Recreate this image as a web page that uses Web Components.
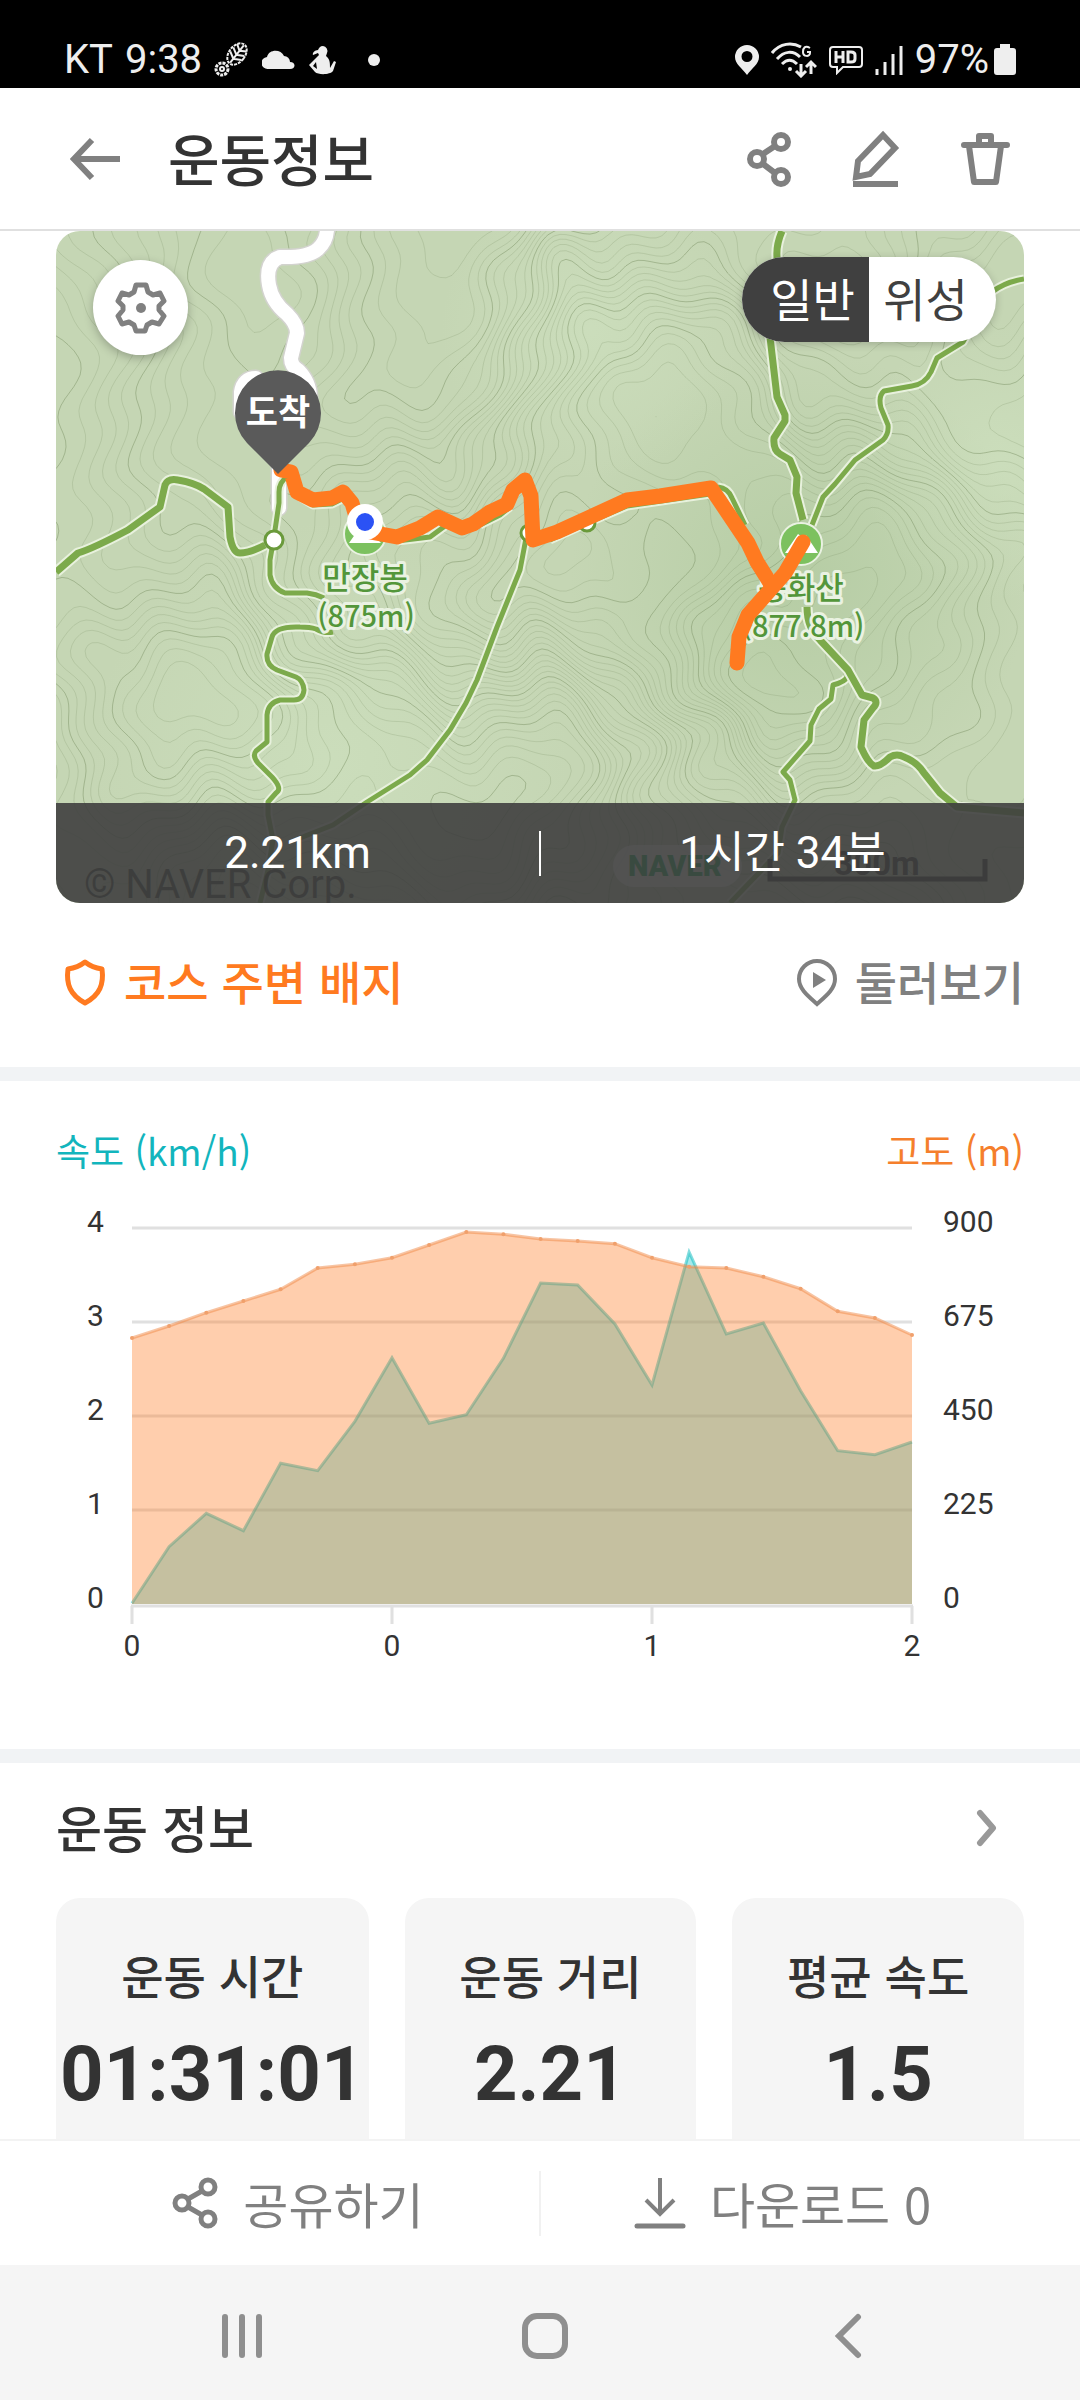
<!DOCTYPE html>
<html lang="ko">
<head>
<meta charset="utf-8">
<meta name="viewport" content="width=device-width, initial-scale=1">
<title>운동정보</title>
<style>
  html, body { margin: 0; height: 100%; background: #fff; }
  body { font-family: "Noto Sans CJK KR", sans-serif; color: #333; }
</style>
</head>
<body>
<workout-app></workout-app>
<script>
const define = (name, html, setup) => customElements.define(name, class extends HTMLElement {
  constructor() {
    super();
    this.attachShadow({ mode: 'open' });
  }
  connectedCallback() {
    if (this.shadowRoot.childNodes.length) return;
    const t = document.createElement('template');
    t.innerHTML = typeof html === 'function' ? html(this) : html;
    this.shadowRoot.append(t.content.cloneNode(true));
    if (setup) setup(this, this.shadowRoot);
  }
});

const BUTTON_RESET = `button{appearance:none;border:0;background:none;padding:0;margin:0;font:inherit;color:inherit;cursor:pointer}`;

/* ---------- icons: [width, height, markup] ---------- */
const ICONS = {
  steps: [36, 36, `<g fill="none" stroke="currentColor"><g transform="rotate(38 23 12)"><ellipse cx="23" cy="12" rx="8" ry="12" stroke-width="2" stroke-dasharray="3 1"/><path d="M23 1v22M17 4l6 4 6-4M16 9l7 4 7-4M16 14l7 4 7-4" stroke-width="2"/></g><circle cx="8" cy="27" r="6" stroke-width="3" stroke-dasharray="3 1"/><circle cx="8" cy="27" r="2" stroke-width="2"/></g>`],
  cloud: [34, 20, `<path fill="currentColor" d="M6 19a6 6 0 0 1-1-12C7 -1 19-1 22 6a6 6 0 0 1 6 6c6 0 6 7 0 7z"/>`],
  person: [28, 32, `<path fill="currentColor" d="M15 2a5 5 0 0 1 4 7l-1 3c4 3 4 7 4 12l4-7 2 1-3 9c-3 4-15 4-18 1L1 21l8-8 2-2-1-2-5 2c-1-2 2-5 5-5 1-2 2-4 5-4zM8 18l-3 4 4 3z"/>`],
  place: [24, 32, `<path fill="currentColor" fill-rule="evenodd" d="M12 1a12 12 0 0 1 12 12c0 7-7 11-12 18C7 24 0 20 0 13A12 12 0 0 1 12 1zm0 6a5 5 0 1 0 0 11 5 5 0 0 0 0-11z"/>`],
  wifi: [46, 36, `<g fill="none" stroke="currentColor" stroke-width="3"><path d="M1 11C9 1 21 0 30 5M6 17c7-8 16-9 23-2M11 22c5-5 10-5 15 0"/><path d="M39 6c-5-3-7 0-7 4 0 5 7 5 7 1v-1h-3" stroke-width="2"/><path d="M30 22v12m-5-5 5 5 5-5M40 32V20m-5 5 5-5 5 5"/></g><circle cx="19" cy="27" r="2" fill="currentColor"/>`],
  hd: [34, 30, `<g fill="none" stroke="currentColor"><path d="M4 2h26q3 0 3 3v14q0 3-3 3H14l-6 6v-6H4q-3 0-3-3V5q0-3 3-3z" stroke-width="2"/><path d="M7 6v12M14 6v12M7 12h7M19 7v10h3q4 0 4-3v-4q0-3-4-3z" stroke-width="3"/></g>`],
  signal: [28, 32, `<path d="M2 25v6M10 18v13M18 10v21M26 2v29" stroke="currentColor" stroke-width="3" fill="none"/>`],
  battery: [22, 34, `<path fill="currentColor" d="M6 1h10v4h3q3 0 3 3v21q0 3-3 3H3q-3 0-3-3V8q0-3 3-3h3z"/>`],
  back: [52, 44, `<path d="M50 22H4M22 3 4 22l18 19" fill="none" stroke="currentColor" stroke-width="6"/>`],
  share: [46, 58, `<g fill="none" stroke="currentColor" stroke-width="6"><circle cx="11" cy="29" r="7"/><circle cx="35" cy="12" r="7"/><circle cx="35" cy="47" r="7"/><path d="m17 24 12-8M17 34l12 9"/></g>`],
  edit: [48, 58, `<path d="M4 47 6 31 31 5l12 13-25 26zM1 54h45" fill="none" stroke="currentColor" stroke-width="6"/>`],
  trash: [50, 58, `<path d="M4 15h43M19 14V6h12v8M9 16l5 36h22l5-36" fill="none" stroke="currentColor" stroke-width="6" stroke-linecap="round" stroke-linejoin="round"/>`],
  gear: [52, 52, `<path d="M21 3h10l2 7 5 3 7-2 4 8-5 5v4l5 6-5 8-7-2-5 3-2 6H21l-2-6-5-3-7 2-4-8 5-6v-4l-5-5 4-8 7 2 5-3z" fill="none" stroke="currentColor" stroke-width="5" stroke-linejoin="round"/><circle cx="26" cy="26" r="5" fill="currentColor"/>`],
  shield: [46, 50, `<path d="M23 4c5 4 10 6 17 7 2 15-2 26-17 34C8 37 4 26 6 11c7-1 12-3 17-7z" fill="none" stroke="currentColor" stroke-width="5" stroke-linejoin="round"/>`],
  explore: [44, 50, `<path d="M22 3a18 18 0 0 1 18 18c0 10-9 17-18 25C13 38 4 31 4 21A18 18 0 0 1 22 3z" fill="none" stroke="currentColor" stroke-width="4"/><path d="m18 14 13 8-13 8z" fill="currentColor"/>`],
  chevron: [22, 38, `<path d="m4 4 13 15L4 34" fill="none" stroke="currentColor" stroke-width="6" stroke-linecap="round" stroke-linejoin="round"/>`],
  shareThin: [48, 54, `<g fill="none" stroke="currentColor" stroke-width="5"><circle cx="11" cy="27" r="7"/><circle cx="37" cy="11" r="7"/><circle cx="37" cy="43" r="7"/><path d="m17 23 14-8M17 31l14 8"/></g>`],
  download: [52, 54, `<path d="M26 2v36M12 24l14 14 14-14" fill="none" stroke="currentColor" stroke-width="4"/><path d="M3 50h46" stroke="currentColor" stroke-width="5" stroke-linecap="round"/>`],
  recents: [42, 46, `<path d="M4 4v38M21 4v38M38 4v38" stroke="currentColor" stroke-width="6" stroke-linecap="round"/>`],
  home: [48, 48, `<rect x="4" y="4" width="40" height="40" rx="12" fill="none" stroke="currentColor" stroke-width="6"/>`],
  navBack: [28, 46, `<path d="M24 4 5 23l19 19" fill="none" stroke="currentColor" stroke-width="6" stroke-linecap="round"/>`]
};
define('ui-icon', el => {
  const [w, h, body] = ICONS[el.getAttribute('name')];
  return `<style>:host{display:block;flex:none}svg{display:block}</style>
    <svg width="${w}" height="${h}" viewBox="0 0 ${w} ${h}" aria-hidden="true">${body}</svg>`;
});

/* ---------- status bar ---------- */
define('status-bar', `
<style>
  :host{display:flex;justify-content:space-between;align-items:flex-end;height:88px;box-sizing:border-box;
    padding:0 64px 4px;background:#000;color:#eee;font:400 40px/48px Roboto,sans-serif}
  div{display:flex;align-items:center;height:48px}
  .left{gap:12px}.right{gap:12px}
  .dot{width:12px;height:12px;border-radius:50%;background:currentColor;margin-left:20px}
  .pct{display:flex;align-items:center;gap:5px}
</style>
<div class="left"><span>KT</span><span>9:38</span><ui-icon name="steps"></ui-icon><ui-icon name="cloud"></ui-icon><ui-icon name="person"></ui-icon><i class="dot"></i></div>
<div class="right"><ui-icon name="place"></ui-icon><ui-icon name="wifi"></ui-icon><ui-icon name="hd"></ui-icon><ui-icon name="signal"></ui-icon><span class="pct">97%<ui-icon name="battery"></ui-icon></span></div>
`);

/* ---------- app header ---------- */
define('app-header', `
<style>${BUTTON_RESET}
  :host{display:flex;align-items:center;height:143px;box-sizing:border-box;padding:0 70px;
    border-bottom:2px solid #e0e0e0;background:#fff;color:#808080}
  h1{margin:0 0 0 46px;padding-bottom:4px;font-size:56px;line-height:72px;font-weight:500;color:#333;flex:1}
  nav{display:flex;align-items:center;gap:60px}
</style>
<button aria-label="뒤로"><ui-icon name="back"></ui-icon></button>
<h1><slot></slot></h1>
<nav><button aria-label="공유"><ui-icon name="share"></ui-icon></button><button aria-label="수정"><ui-icon name="edit"></ui-icon></button><button aria-label="삭제"><ui-icon name="trash"></ui-icon></button></nav>
`);

/* ---------- map ---------- */
// Elevation field: peaks and hollows, roughened by a few sine ridges.
const HILLS = [[365,540,80,4],[800,550,130,7],[740,690,60,4],[540,560,70,4],[610,600,80,3],[950,430,90,-3],[180,300,120,3],[420,260,90,-3],[610,340,80,4],[960,300,60,3],[160,700,110,-4],[360,780,110,-3],[580,760,90,-3],[940,700,110,4],[90,450,80,-3],[700,430,70,2]];
const elevation = (x, y) => {
  const a = x + 14 * Math.sin(y / 31) + 8 * Math.sin(y / 13 + x / 40);
  const b = y + 14 * Math.sin(x / 27) + 8 * Math.sin(x / 12 - y / 35);
  let v = a / 190 + b / 400 + 1.1 * Math.sin(a / 62 + b / 90) + .9 * Math.sin(b / 55 - a / 120);
  for (const [hx, hy, r, k] of HILLS) v += k * Math.exp(-((a - hx) ** 2 + (b - hy) ** 2) / (2 * r * r));
  return v;
};
// Marching squares over the field; every fifth level goes to the major path.
function contours(x0, y0, w, h, step, interval) {
  const cols = Math.ceil(w / step), rows = Math.ceil(h / step), g = [];
  for (let j = 0; j <= rows; j++) { g.push([]); for (let i = 0; i <= cols; i++) g[j].push(elevation(x0 + i * step, y0 + j * step) / interval); }
  let minor = '', major = '';
  for (let j = 0; j < rows; j++) for (let i = 0; i < cols; i++) {
    const c = [g[j][i], g[j][i + 1], g[j + 1][i + 1], g[j + 1][i]];
    const px = [[i, j], [i + 1, j], [i + 1, j + 1], [i, j + 1]];
    for (let L = Math.ceil(Math.min(...c)); L <= Math.max(...c); L++) {
      const hit = [];
      for (let e = 0; e < 4; e++) {
        const p = c[e], q = c[(e + 1) % 4];
        if ((p < L) !== (q < L)) {
          const t = (L - p) / (q - p), P = px[e], Q = px[(e + 1) % 4];
          hit.push((x0 + step * (P[0] + t * (Q[0] - P[0]))).toFixed(1) + ' ' + (y0 + step * (P[1] + t * (Q[1] - P[1]))).toFixed(1));
        }
      }
      for (let k = 0; k + 1 < hit.length; k += 2) {
        const d = 'M' + hit[k] + 'L' + hit[k + 1];
        if (L % 5 === 0) major += d; else minor += d;
      }
    }
  }
  return [minor, major];
}
const WIDE = [
  'M56 572L78 553Q92 549 128 530L160 507L165 485Q168 478 178 480Q195 483 204 489L216 498L228 507L230 537Q233 553 240 553Q250 553 265 545',
  'M782 231Q776 245 777 257L770 337L777 397L785 415V421L774 438Q773 450 780 454L790 460L797 477L796 493L803 520',
  'M807 607Q807 628 820 640L848 670L862 695L873 698Q879 702 873 708L864 720L861 747Q868 763 874 766Q880 767 890 757Q897 753 904 757Q917 762 924 773L940 793L957 807L1024 813'
];
const SLIM = [
  'M287 477Q279 482 279 492V503L274 537L270 560V575Q272 588 285 593H307Q316 594 324 598',
  'M333 632Q325 634 316 629Q310 627 300 627Q275 626 272 637L267 654Q266 665 277 670L296 677Q303 680 304 690Q303 700 294 700H280Q268 703 267 715V742L256 751Q252 756 258 763L272 777Q283 789 276 793L268 802V815L273 840L268 870L260 903',
  'M1024 279Q1005 282 992 292L963 342L937 358L931 372Q925 384 912 386L884 391Q878 396 881 408L888 425Q889 434 883 440L855 460L835 484L823 497L812 525',
  'M527 533L520 570L497 627L477 680L466 703L450 730L427 760L410 775L367 802L333 825L300 838',
  'M847 677Q845 682 833 685L831 699L819 709L811 725L810 741L783 772L790 780L795 800L782 827L778 853L730 903',
  'M300 497L313 505L332 504L350 495M397 541L430 537L445 526M480 525L500 515L510 507M550 540L590 522L627 506L710 494M718 487Q728 488 732 498L745 525'
];
const ROAD = 'M327 225Q328 240 318 249Q308 258 280 257Q265 262 269 285Q272 302 287 314Q297 324 297 333L291 358Q291 366 298 370Q310 382 310 398M241 412V392Q243 378 256 378M279 465V508';
const trail = (ds, w) => ds.map(d => `<path d="${d}" stroke="#e8f1dd" stroke-width="${w + 4}"/>`).join('') + ds.map(d => `<path d="${d}" stroke="#7caa4b" stroke-width="${w}"/>`).join('');
define('trail-map', () => {
  const [minor, major] = contours(56, 231, 968, 672, 6, .42);
  return `
<style>${BUTTON_RESET}
  :host{display:block;position:relative;margin:0 56px;height:672px;border-radius:24px;overflow:hidden;background:#c5d6b4}
  svg.map{display:block;width:100%;height:100%}
  .label{font:500 31px "Noto Sans CJK KR",sans-serif;fill:#53963a;stroke:#eaf2e2;stroke-width:6px;paint-order:stroke;stroke-linejoin:round;text-anchor:middle}
  .height{font-size:29px}
  .settings{position:absolute;left:37px;top:29px;width:95px;height:95px;border-radius:50%;background:#fff;color:#808080;
    display:grid;place-items:center;box-shadow:0 3px 10px rgba(0,0,0,.25)}
  .mode{position:absolute;right:28px;top:26px;display:flex;height:85px;border-radius:43px;overflow:hidden;background:#fff;
    box-shadow:0 2px 8px rgba(0,0,0,.2);font-size:46px;line-height:80px}
  .mode button{width:127px;color:#404040;padding-bottom:5px}
  .mode button:first-child{background:#404040;color:#fff;padding-left:14px}
  .mode button:last-child{padding-right:14px}
  .summary{position:absolute;left:0;right:0;bottom:0;height:100px;display:flex;align-items:center;background:rgba(63,63,63,.9);
    color:#fff;font:400 44px/64px Roboto,"Noto Sans CJK KR",sans-serif}
  .summary span{flex:1;text-align:center}
  .summary i{width:2px;height:45px;background:#fff}
</style>
<svg class="map" viewBox="56 231 968 672" preserveAspectRatio="xMidYMid slice" role="img" aria-label="코스 지도">
  <defs><radialGradient id="shade"><stop offset="0" stop-color="#9fbf8d" stop-opacity=".4"/><stop offset="1" stop-color="#9fbf8d" stop-opacity="0"/></radialGradient>
  <radialGradient id="light"><stop offset="0" stop-color="#cfe2c0" stop-opacity=".6"/><stop offset="1" stop-color="#cfe2c0" stop-opacity="0"/></radialGradient></defs>
  <circle cx="800" cy="580" r="230" fill="url(#shade)"/><circle cx="330" cy="760" r="240" fill="url(#light)"/>
  <circle cx="590" cy="330" r="150" fill="url(#light)"/><circle cx="1000" cy="460" r="140" fill="url(#light)"/>
  <path d="${minor}" fill="none" stroke="#7d9468" stroke-opacity=".24"/>
  <path d="${major}" fill="none" stroke="#7d9468" stroke-opacity=".5"/>
  <g fill="none" stroke-linejoin="round">
    <g stroke-linecap="round"><path d="${ROAD}" stroke="#d3d3cf" stroke-width="17"/><path d="${ROAD}" stroke="#fff" stroke-width="14"/></g>
    ${trail(SLIM, 5)}${trail(WIDE, 7)}
  </g>
  <g fill="#fff" stroke="#6a9a3b" stroke-width="3"><circle cx="274" cy="540" r="9"/><circle cx="587" cy="523" r="8"/><circle cx="529" cy="533" r="8"/></g>
  <g stroke="#eaf2e2" stroke-width="2"><circle cx="365" cy="534" r="21" fill="#7cc15f"/><circle cx="801" cy="544" r="21" fill="#7cc15f"/></g>
  <path d="M349 543l14-20 18 20zM785 553l13-19 4 3 4-2 12 18z" fill="#fff"/>
  <text class="label" x="365" y="589">만장봉</text><text class="label height" x="366" y="627">(875m)</text>
  <text class="label" x="801" y="599">봉화산</text><text class="label height" x="803" y="637">(877.8m)</text>
  <g fill="none" stroke="#ff7a20" stroke-width="15" stroke-linejoin="round" stroke-linecap="round">
    <path d="M281 470L291 472L297 492L313 500L332 498L343 492L352 503L357 520L370 532L397 537L420 528L438 517L462 528L473 524L490 512L507 504L513 490L525 480L531 496L533 540L557 532L590 517L627 500L660 496L711 488L748 543L757 562L772 586"/>
    <path d="M803 542L785 573L770 590L748 615L739 637L737 663"/>
  </g>
  <circle cx="365" cy="522" r="18" fill="#fff"/><circle cx="365" cy="522" r="9" fill="#2b52f5"/>
  <path d="M278 474L247 443A43 43 0 1 1 309 443Z" fill="#5a5a5a"/>
  <text x="278" y="425" text-anchor="middle" fill="#fff" font-size="35" font-weight="700" font-family="Noto Sans CJK KR">도착</text>
  <text x="84" y="898" fill="#000" fill-opacity=".75" font-size="40" font-family="Roboto">© NAVER Corp.</text>
  <rect x="613" y="845" width="129" height="42" rx="21" fill="#fff" fill-opacity=".85"/>
  <text x="628" y="876" fill="#04a94b" font-size="29" font-weight="900" font-family="Roboto">NAVER</text>
  <path d="M770 859V879H985V859" fill="none" stroke="#222" stroke-width="5"/>
  <text x="877" y="875" text-anchor="middle" fill="#222" font-size="33" font-weight="700" font-family="Roboto">300m</text>
</svg>
<button class="settings" aria-label="지도 설정"><ui-icon name="gear"></ui-icon></button>
<div class="mode"><button aria-pressed="true">일반</button><button aria-pressed="false">위성</button></div>
<div class="summary"><span>2.21km</span><i></i><span>1시간 34분</span></div>`;
});

/* ---------- badge row ---------- */
define('badge-row', `
<style>${BUTTON_RESET}
  :host{display:flex;justify-content:space-between;align-items:center;height:164px;box-sizing:border-box;padding:0 56px 4px 62px;
    font-size:46px;line-height:64px;font-weight:500}
  button{display:flex;align-items:center;gap:16px}
  span{padding-bottom:6px}
  .badge{color:#ff7a20}.look{color:#808080}
</style>
<button class="badge"><ui-icon name="shield"></ui-icon><span>코스 주변 배지</span></button>
<button class="look"><ui-icon name="explore"></ui-icon><span>둘러보기</span></button>
`);
define('section-gap', `<style>:host{display:block;height:14px;background:#f1f3f5}</style>`);

/* ---------- speed / elevation chart ---------- */
define('workout-chart', () => {
  const speed = [1270,1100,1000,1052,850,872,724,533,730,704,535,309,315,432,615,216,462,429,632,812,824,786];
  const height = [474,438,398,363,328,264,253,233,195,156,163,177,183,191,233,260,264,290,326,394,414,465];
  const pts = a => a.map((v, i) => [(132 + i * 780 / 21).toFixed(1), (1180 + v / 3).toFixed(1)]);
  const line = a => 'M' + pts(a).map(p => p.join(' ')).join('L');
  const rows = [0, 1, 2, 3, 4].map(i => 1228 + i * 94);
  return `
<style>
  :host{display:block;padding:40px 56px 0}
  header{display:flex;justify-content:space-between;font-size:37px;line-height:58px}
  .speed{color:#12b5bd}.height{color:#f57f2c}
  svg{display:block;width:100%}
  text{font:400 30px Roboto,sans-serif;fill:#333}
  .x{text-anchor:middle}
</style>
<header><span class="speed">속도 (km/h)</span><span class="height">고도 (m)</span></header>
<svg viewBox="56 1179 968 570" role="img" aria-label="속도와 고도 그래프">
  <path d="${rows.slice(0, 4).map(y => `M132 ${y}H912`).join('')}M131 1606H913M132 1606V1624M392 1606V1624M652 1606V1624M912 1606V1624" fill="none" stroke="#e0e0e0" stroke-width="3"/>
  <path d="${line(speed)}V1604H132Z" fill="#08c4c8" fill-opacity=".37"/>
  <path d="${line(speed)}" fill="none" stroke="#08b9be" stroke-opacity=".5" stroke-width="3"/>
  <path d="${line(height)}V1604H132Z" fill="#ff7a20" fill-opacity=".37"/>
  <path d="${line(height)}" fill="none" stroke="#f08a48" stroke-opacity=".5" stroke-width="3"/>
  ${pts(height).map(([x, y]) => `<circle cx="${x}" cy="${y}" r="2" fill="#f0a06c"/>`).join('')}
  ${rows.map((y, i) => `<text x="87" y="${y + 4}">${4 - i}</text><text x="943" y="${y + 4}">${900 - 225 * i}</text>`).join('')}
  ${[0, 0, 1, 2].map((t, i) => `<text class="x" x="${132 + 260 * i}" y="1656">${t}</text>`).join('')}
</svg>`;
});

/* ---------- stats ---------- */
define('stat-card', el => `
<style>
  :host{display:block;height:290px;box-sizing:border-box;padding-top:44px;border-radius:24px;background:#f5f5f5;text-align:center;min-width:0;white-space:nowrap}
  h3{margin:0 0 20px;font-size:46px;line-height:64px;font-weight:500}
  p{margin:0;display:flex;justify-content:center;font:700 76px/96px Roboto,sans-serif}
</style>
<h3>${el.getAttribute('label')}</h3><p><slot></slot></p>`);
define('workout-stats', `
<style>${BUTTON_RESET}
  :host{display:block;padding:0 56px}
  header{display:flex;justify-content:space-between;align-items:center;height:130px;padding-right:26px;margin-bottom:5px}
  h2{margin:0;padding-bottom:4px;font-size:50px;line-height:72px;font-weight:500}
  button{color:#999}
  .cards{display:grid;grid-template-columns:15fr 14fr 14fr;gap:36px}
</style>
<header><h2>운동 정보</h2><button aria-label="자세히"><ui-icon name="chevron"></ui-icon></button></header>
<div class="cards"><stat-card label="운동 시간">01:31:01</stat-card><stat-card label="운동 거리">2.21</stat-card><stat-card label="평균 속도">1.5</stat-card></div>
`);

/* ---------- bottom ---------- */
define('action-bar', `
<style>${BUTTON_RESET}
  :host{display:flex;align-items:center;height:126px;box-sizing:border-box;padding:0 56px;border-top:2px solid #f3f3f3;background:#fff;
    color:#808080;font:400 49px/64px "Noto Sans CJK KR",sans-serif}
  button{flex:1;display:flex;align-items:center;justify-content:center;gap:24px}
  i{width:2px;height:65px;background:#f1f1f1}
</style>
<button><ui-icon name="shareThin"></ui-icon>공유하기</button><i></i><button><ui-icon name="download"></ui-icon>다운로드 0</button>
`);
define('system-nav', `
<style>${BUTTON_RESET}
  :host{display:grid;grid-template-columns:repeat(3,1fr);height:135px;box-sizing:border-box;padding:6px 80px 0 90px;background:#f5f5f5;color:#8f8f8f}
  button{display:grid;place-items:center}
</style>
<button aria-label="최근 앱"><ui-icon name="recents"></ui-icon></button><button aria-label="홈"><ui-icon name="home"></ui-icon></button><button aria-label="뒤로"><ui-icon name="navBack"></ui-icon></button>
`);

define('workout-app', `
<style>
  :host{display:flex;flex-direction:column;height:100vh;background:#fff}
  main{flex:1;min-height:0;overflow:hidden}
  status-bar,app-header,action-bar,system-nav{flex:none}
</style>
<status-bar></status-bar>
<app-header>운동정보</app-header>
<main><trail-map></trail-map><badge-row></badge-row><section-gap></section-gap><workout-chart></workout-chart><section-gap></section-gap><workout-stats></workout-stats></main>
<action-bar></action-bar>
<system-nav></system-nav>
`);
</script>
</body>
</html>
